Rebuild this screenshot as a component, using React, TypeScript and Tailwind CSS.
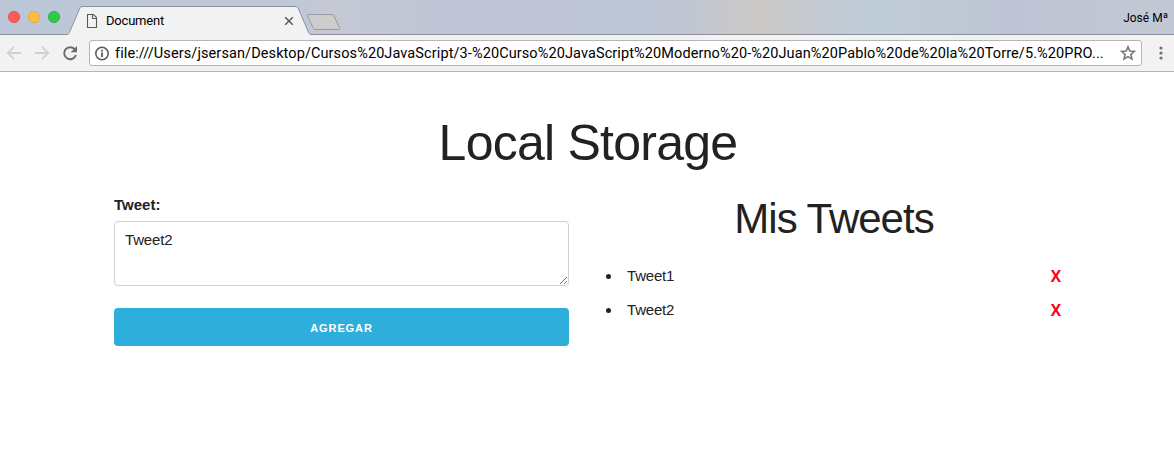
import React, { useState } from "react";

const URL_TEXT =
  "file:///Users/jsersan/Desktop/Cursos%20JavaScript/3-%20Curso%20JavaScript%20Moderno%20-%20Juan%20Pablo%20de%20la%20Torre/5.%20PRO...";

function TabStrip() {
  return (
    <div className="relative flex h-[35px] items-start bg-[linear-gradient(90deg,#bbc7d8_0%,#bfc8d6_24%,#c5c9d4_29%,#c0c6d5_36%,#bec5d5_56%,#c2c7d0_60%,#cac9c8_63%,#cac9c8_66%,#c2cad3_70%,#bfcdd8_75%,#c0c9d5_80%,#bec4d4_86%,#c1c6d4_92%,#c3c8d5_100%)] text-black">
      <svg className="absolute inset-0" width="1174" height="35" viewBox="0 0 1174 35" fill="none">
        <path d="M0 34.5H1174" stroke="#8b9099" />
        <path
          d="M67 35C69 34 69 33 70 31L79.500 9C80.200 7.200 81 6.500 83 6.500H295C297 6.500 297.800 7.200 298.500 9L308 31C309 33 309 34 311 35Z"
          fill="#f2f2f2"
        />
        <path
          d="M67 34.500C69 34 69 33 70 31L79.500 9C80.200 7.200 81 6.500 83 6.500H295C297 6.500 297.800 7.200 298.500 9L308 31C309 33 309 34 311 34.500"
          stroke="#8990a0"
        />
        <path
          d="M308.500 14.500H331C333 14.500 333.700 15 334.500 17L339.500 28C340 29.200 339.500 29.500 338.500 29.500H316C314.500 29.500 313.800 29 313 27.500L307.500 16C307 15 307.300 14.500 308.500 14.500Z"
          fill="#cdcdcd"
          stroke="#9a9a9d"
        />
        <circle cx="14" cy="17" r="5.700" fill="#fc5b57" stroke="#e2463f" strokeWidth=".7" />
        <circle cx="34" cy="17" r="5.700" fill="#fdbc40" stroke="#dfa034" strokeWidth=".7" />
        <circle cx="54" cy="17" r="5.700" fill="#34c84a" stroke="#24aa35" strokeWidth=".7" />
        <path d="M87.500 14.500H93.500L96.500 17.500V27.500H87.500ZM92.500 14.500V18.500H96.500" stroke="#5a5a5a" strokeWidth="1.100" />
        <path d="M285.200 17.200L292.800 24.800M292.800 17.200L285.200 24.800" stroke="#5a5a5a" strokeWidth="1.500" />
      </svg>
      <span className="relative ml-[106px] mt-[13px] text-[13px] leading-4 tracking-[-0.2px]">Document</span>
      <span className="relative ml-auto mr-[6px] mt-[10px] text-[12px] leading-4">José Mª</span>
    </div>
  );
}

function Toolbar() {
  return (
    <div className="flex h-[37px] items-start border-b border-[#b4b4b4] bg-[#f2f2f2] pt-[5px]">
      <svg className="shrink-0" width="89" height="26" viewBox="0 40 89 26" fill="none">
        <path d="M21 53H8M14 46.800L7.800 53L14 59.200" stroke="#d0d0d0" strokeWidth="1.800" />
        <path d="M35 53H48M42 46.800L48.200 53L42 59.200" stroke="#d0d0d0" strokeWidth="1.800" />
        <path d="M74.700 49.200A6 6 0 1 0 75.900 55" stroke="#6c6c6c" strokeWidth="2" />
        <path d="M77 46V52.300H70.700Z" fill="#6c6c6c" />
      </svg>
      <div className="flex h-[26px] w-[1053px] shrink-0 items-center rounded-[3px] border border-[#b5b5b5] bg-white">
        <svg className="ml-[5px] shrink-0" width="15" height="15" viewBox="0 0 15 15" fill="none">
          <circle cx="7" cy="7.500" r="6.200" stroke="#5a5a5a" strokeWidth="1.500" />
          <path d="M6.100 3.800H7.900V5.400H6.100ZM6.100 6.500H7.900V11H6.100Z" fill="#5a5a5a" />
        </svg>
        <span className="ml-[5px] w-[1001px] whitespace-nowrap pt-[2px] text-[14.5px] leading-5 tracking-[0.1px] text-black">{URL_TEXT}</span>
        <svg className="ml-[4px] shrink-0" width="16" height="16" viewBox="0 0 16 16" fill="none">
          <path
            d="M8 1.900L9.800 6.100L14.300 6.500L10.900 9.500L11.900 13.900L8 11.600L4.100 13.900L5.100 9.500L1.700 6.500L6.200 6.100Z"
            stroke="#777777"
            strokeWidth="1.600"
          />
        </svg>
      </div>
      <svg className="ml-[16px]" width="6" height="26" viewBox="0 0 6 26" fill="#707070">
        <circle cx="3" cy="8" r="1.600" />
        <circle cx="3" cy="13" r="1.600" />
        <circle cx="3" cy="18" r="1.600" />
      </svg>
    </div>
  );
}

function TweetForm({ onAdd }: { onAdd: (tweet: string) => void }) {
  const [value, setValue] = useState("Tweet2");
  return (
    <form
      className="flex w-[455px] flex-col"
      onSubmit={(e) => {
        e.preventDefault();
        if (value) onAdd(value);
      }}
    >
      <label htmlFor="tweet" className="mb-[4px] h-6 text-[15px] font-bold leading-6">
        Tweet:
      </label>
      <textarea
        id="tweet"
        value={value}
        onChange={(e) => setValue(e.target.value)}
        className="block h-[65px] w-full resize-y rounded border border-[#d1d1d1] bg-white px-[10px] py-[6px] text-[15px] leading-6 tracking-[-0.15px] outline-none"
      />
      <button type="submit" className="mt-[22px] h-[38px] rounded bg-[#2eaeda] pt-[2px] text-[11px] font-bold uppercase tracking-[0.9px] text-white">
        Agregar
      </button>
    </form>
  );
}

function TweetList({ tweets, onRemove }: { tweets: string[]; onRemove: (index: number) => void }) {
  return (
    <section className="w-[455px]">
      <h2 className="pl-[3px] text-center text-[42px] leading-[52px] tracking-[-1px]">Mis Tweets</h2>
      <ul className="mt-[19px] flex flex-col gap-[10px]">
        {tweets.map((tweet, index) => (
          <li key={index} className="flex h-6 items-center pl-[1px] text-[15px] leading-6">
            <span className="mr-[16px] size-[5px] rounded-full bg-[#222]" />
            <span className="tracking-[-0.2px]">{tweet}</span>
            <button onClick={() => onRemove(index)} className="-mr-px ml-auto font-['Open_Sans',sans-serif] text-[15.5px] font-bold leading-6 text-[#ff0019]">
              X
            </button>
          </li>
        ))}
      </ul>
    </section>
  );
}

export default function App() {
  const [tweets, setTweets] = useState(["Tweet1", "Tweet2"]);
  return (
    <div className="h-[457px] overflow-hidden bg-white">
      <header className="font-[Roboto,sans-serif]">
        <TabStrip />
        <Toolbar />
      </header>
      <main className="px-[114px] pt-[41px] font-['Liberation_Sans',sans-serif] text-[#222]">
        <h1 className="pl-[2px] text-center text-[50px] leading-[60px] tracking-[-0.75px]">Local Storage</h1>
        <div className="mt-[20px] flex justify-between">
          <TweetForm onAdd={(tweet) => setTweets([...tweets, tweet])} />
          <TweetList tweets={tweets} onRemove={(index) => setTweets(tweets.filter((_, i) => i !== index))} />
        </div>
      </main>
    </div>
  );
}
